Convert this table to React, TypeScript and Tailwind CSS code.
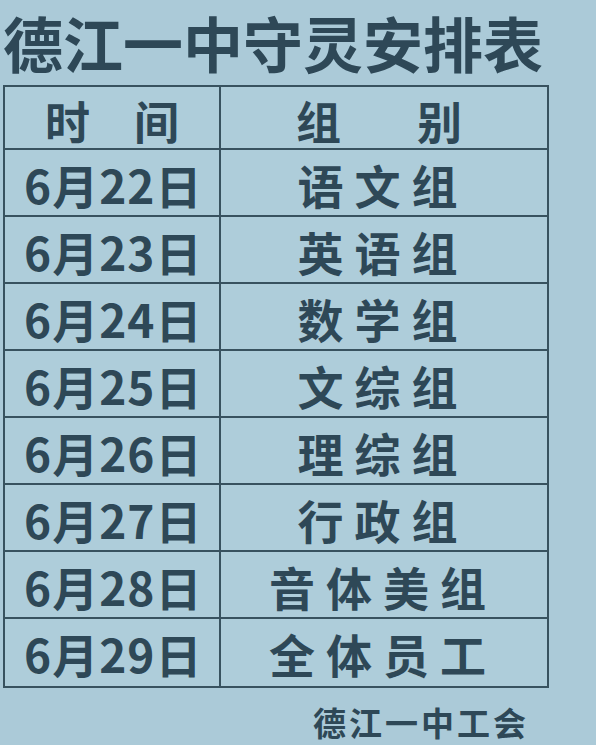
const rows = [
  { date: "6月22日", group: "语文组" },
  { date: "6月23日", group: "英语组" },
  { date: "6月24日", group: "数学组" },
  { date: "6月25日", group: "文综组" },
  { date: "6月26日", group: "理综组" },
  { date: "6月27日", group: "行政组" },
  { date: "6月28日", group: "音体美组" },
  { date: "6月29日", group: "全体员工" },
];

const font = { fontFamily: '"Noto Sans CJK SC", "Noto Sans", sans-serif' };

export default function App() {
  return (
    <div
      className="w-[596px] h-[745px] overflow-hidden bg-[#abcad8] text-[#2e4857]"
      style={font}
    >
      <h1 className="pl-[3px] pt-[10px] h-[85px] text-[60px] leading-[64px] font-bold whitespace-nowrap">
        德江一中守灵安排表
      </h1>

      <div className="ml-[3px] w-[546px] border-2 border-[#38525f] bg-[#aecdda]">
        <div className="grid grid-cols-[216px_1fr] h-[63px] border-b-2 border-[#38525f]">
          <div className="flex items-center justify-center gap-[44px] border-r-2 border-[#38525f] text-[45px] font-bold">
            <span>时</span>
            <span>间</span>
          </div>
          <div className="flex items-center justify-center gap-[76px] pr-[10px] text-[45px] font-bold">
            <span>组</span>
            <span>别</span>
          </div>
        </div>

        {rows.map((row, i) => (
          <div
            key={row.date}
            className={`grid grid-cols-[216px_1fr] h-[67px] ${
              i < rows.length - 1 ? "border-b-2 border-[#38525f]" : ""
            }`}
          >
            <div className="flex items-center pl-[19px] border-r-2 border-[#38525f] text-[46px] font-bold tracking-[1px] whitespace-nowrap">
              {row.date}
            </div>
            <div className="flex items-center justify-center pr-[2px] text-[46px] font-bold tracking-[11px] whitespace-nowrap">
              {row.group}
            </div>
          </div>
        ))}
      </div>

      <div className="pl-[313px] pt-[14px] text-[33px] leading-[40px] font-bold tracking-[3px] whitespace-nowrap">
        德江一中工会
      </div>
    </div>
  );
}
